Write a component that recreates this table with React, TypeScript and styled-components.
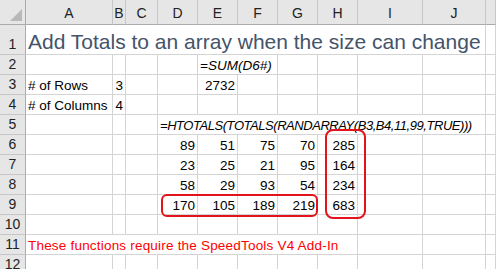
import styled, { createGlobalStyle } from "styled-components";

const GlobalStyle = createGlobalStyle`
  html, body {
    margin: 0;
    padding: 0;
    background: #ffffff;
    overflow: hidden;
  }
  body {
    font-family: "Liberation Sans", Arial, sans-serif;
  }
`;

type Tone = "title" | "red" | "formula";

type CellData = {
  text?: string;
  span?: number;
  align?: "left" | "right";
  italic?: boolean;
  tone?: Tone;
};

const columns = ["A", "B", "C", "D", "E", "F", "G", "H", "I", "J", ""];

const n = (text: string): CellData => ({ text, align: "right" });
const empty = (count: number): CellData[] =>
  Array.from({ length: count }, () => ({}));

const rows: CellData[][] = [
  [{ text: "Add Totals to an array when the size can change", span: 10, tone: "title" }, {}],
  [...empty(4), { text: "=SUM(D6#)", span: 2, italic: true }, ...empty(5)],
  [{ text: "# of Rows" }, n("3"), {}, {}, n("2732"), ...empty(6)],
  [{ text: "# of Columns" }, n("4"), ...empty(9)],
  [
    ...empty(3),
    {
      text: "=HTOTALS(TOTALS(RANDARRAY(B3,B4,11,99,TRUE)))",
      span: 7,
      italic: true,
      tone: "formula",
    },
    {},
  ],
  [...empty(3), n("89"), n("51"), n("75"), n("70"), n("285"), ...empty(3)],
  [...empty(3), n("23"), n("25"), n("21"), n("95"), n("164"), ...empty(3)],
  [...empty(3), n("58"), n("29"), n("93"), n("54"), n("234"), ...empty(3)],
  [...empty(3), n("170"), n("105"), n("189"), n("219"), n("683"), ...empty(3)],
  empty(11),
  [{ text: "These functions require the SpeedTools V4 Add-In", span: 8, tone: "red" }, ...empty(3)],
  empty(11),
];

export default function App() {
  return (
    <>
      <GlobalStyle />
      <Sheet>
        <Corner>
          <CornerMark />
        </Corner>
        {columns.map((c, i) => (
          <ColHeader key={"h" + i}>{c}</ColHeader>
        ))}
        {rows.map((row, r) => [
          <RowHeader key={"r" + r}>{r + 1}</RowHeader>,
          ...row.map((cell, c) => (
            <Cell
              key={r + "-" + c}
              $span={cell.span ?? 1}
              $align={cell.align ?? "left"}
              $italic={!!cell.italic}
              $tone={cell.tone}
            >
              {cell.text}
            </Cell>
          )),
        ])}
        <Highlight style={{ left: 161, top: 194, width: 157, height: 23 }} />
        <Highlight style={{ left: 325, top: 129, width: 41, height: 90 }} $radius={8} />
      </Sheet>
    </>
  );
}

const Sheet = styled.div`
  position: relative;
  display: grid;
  grid-template-columns: 26px 87px 13px 32px 40px 40px 40px 40px 40px 65px 63px 1fr;
  grid-template-rows: 25px 30px repeat(11, 20px);
  width: 496px;
  height: 269px;
  overflow: hidden;
  color: #000000;
`;

const Corner = styled.div`
  position: relative;
  background: #e6e6e6;
  border-right: 1px solid #ababab;
  border-bottom: 1px solid #ababab;
  box-sizing: border-box;
`;

const CornerMark = styled.div`
  position: absolute;
  right: 3px;
  bottom: 3px;
  width: 0;
  height: 0;
  border-left: 12px solid transparent;
  border-bottom: 12px solid #b8b8b8;
`;

const ColHeader = styled.div`
  display: flex;
  align-items: center;
  justify-content: center;
  background: #e6e6e6;
  border-right: 1px solid #c6c6c6;
  border-bottom: 1px solid #ababab;
  box-sizing: border-box;
  font-size: 14px;
  color: #222222;
  padding-top: 2px;
`;

const RowHeader = styled.div`
  display: flex;
  align-items: flex-end;
  justify-content: center;
  background: #e6e6e6;
  border-right: 1px solid #ababab;
  border-bottom: 1px solid #c6c6c6;
  box-sizing: border-box;
  font-size: 14px;
  color: #222222;
  padding-bottom: 2px;
`;

const fontSizes: Record<Tone, string> = {
  title: "21px",
  red: "13.5px",
  formula: "13px",
};

const spacings: Record<Tone, string> = {
  title: "0",
  red: "0.2px",
  formula: "-0.45px",
};

const Cell = styled.div<{
  $span: number;
  $align: "left" | "right";
  $italic: boolean;
  $tone?: Tone;
}>`
  grid-column: span ${(p) => p.$span};
  display: flex;
  align-items: flex-end;
  justify-content: ${(p) => (p.$align === "right" ? "flex-end" : "flex-start")};
  padding: 0 2px 2px 2px;
  border-right: 1px solid #d4d4d4;
  border-bottom: 1px solid #d4d4d4;
  box-sizing: border-box;
  white-space: nowrap;
  overflow: hidden;
  font-size: ${(p) => (p.$tone ? fontSizes[p.$tone] : "13.5px")};
  letter-spacing: ${(p) => (p.$tone ? spacings[p.$tone] : "0")};
  font-style: ${(p) => (p.$italic ? "italic" : "normal")};
  color: ${(p) =>
    p.$tone === "title" ? "#44546a" : p.$tone === "red" ? "#ff0000" : "#000000"};
  line-height: 1;
`;

const Highlight = styled.div<{ $radius?: number }>`
  position: absolute;
  box-sizing: border-box;
  border: 2px solid #e3121b;
  border-radius: ${(p) => p.$radius ?? 6}px;
  pointer-events: none;
`;
